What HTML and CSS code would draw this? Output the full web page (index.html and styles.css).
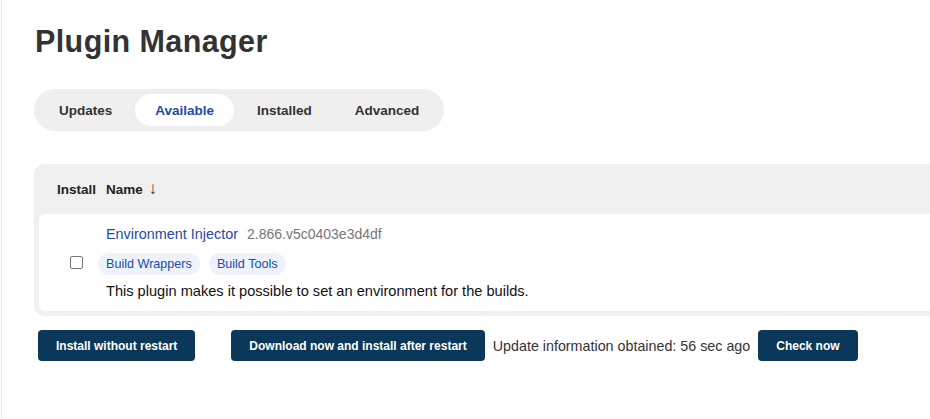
FILE: index.html
```html
<!DOCTYPE html>
<html>
<head>
<meta charset="utf-8">
<link rel="stylesheet" href="styles.css">
</head>
<body>
<div class="page">
  <h1 class="title">Plugin Manager</h1>
  <nav class="tabs">
    <span class="tab">Updates</span>
    <span class="tab active">Available</span>
    <span class="tab">Installed</span>
    <span class="tab">Advanced</span>
  </nav>
  <div class="table">
    <div class="thead">
      <span class="th th-install">Install</span>
      <span class="th th-name">Name <span class="arrow">↓</span></span>
    </div>
    <div class="row">
      <div class="cell-check"><span class="checkbox"></span></div>
      <div class="cell-info">
        <div class="name-line"><span class="pname">Environment Injector</span><span class="version">2.866.v5c0403e3d4df</span></div>
        <div class="tags"><span class="tag">Build Wrappers</span><span class="tag">Build Tools</span></div>
        <div class="desc">This plugin makes it possible to set an environment for the builds.</div>
      </div>
    </div>
  </div>
  <div class="actions">
    <button class="btn btn-first">Install without restart</button>
    <button class="btn">Download now and install after restart</button>
    <span class="info">Update information obtained: 56 sec ago</span>
    <button class="btn">Check now</button>
  </div>
</div>
</body>
</html>
```

FILE: styles.css
```css
html, body {
  margin: 0;
  padding: 0;
  background: #fff;
  overflow: hidden;
}
body {
  font-family: "Liberation Sans", Arial, Helvetica, sans-serif;
  color: #333;
}
.page {
  margin-left: 1px;
  border-left: 1px solid #ebebeb;
  min-height: 419px;
  box-sizing: border-box;
  padding: 24px 0 0 32px;
}
.title {
  margin: 0 0 0 1px;
  font-size: 30.5px;
  line-height: 34px;
  font-weight: 700;
  color: #333;
  letter-spacing: 0.4px;
}
.tabs {
  margin-top: 31px;
  display: inline-flex;
  gap: 3px;
  padding: 5px;
  background: #efefef;
  border-radius: 21px;
}
.tab {
  height: 32px;
  line-height: 33px;
  padding: 0 20px;
  font-size: 13.5px;
  font-weight: 700;
  color: #333;
  border-radius: 16px;
}
.tab.active {
  background: #fff;
  color: #1d4aab;
}
.table {
  margin-top: 33px;
  background: #f0f0f0;
  border-radius: 10px 0 0 10px;
  padding: 0 0 5px 5px;
}
.thead {
  height: 50px;
  display: flex;
  align-items: center;
  font-size: 13.5px;
  font-weight: 700;
  color: #222;
}
.th-install {
  margin-left: 18px;
  width: 49px;
}
.arrow {
  font-weight: 400;
  font-size: 17px;
  margin-left: 2px;
  color: #333;
}
.row {
  background: #fff;
  border-radius: 6px 0 0 6px;
  display: flex;
  height: 97px;
}
.cell-check {
  width: 67px;
  display: flex;
  align-items: center;
}
.checkbox {
  margin-left: 31px;
  width: 11px;
  height: 11px;
  border: 1px solid #767676;
  border-radius: 2px;
  background: #fff;
}
.cell-info {
  padding-top: 11px;
}
.name-line {
  font-size: 14px;
  line-height: 18px;
}
.pname {
  color: #1d4aab;
  font-size: 14.4px;
}
.version {
  color: #777;
  margin-left: 9px;
}
.tags {
  display: flex;
  gap: 9px;
  margin-top: 10px;
  margin-left: -8px;
}
.tag {
  background: #eef3fb;
  color: #1d4aab;
  font-size: 12.6px;
  height: 22px;
  line-height: 22px;
  padding: 0 8px;
  border-radius: 11px;
}
.desc {
  margin-top: 7px;
  font-size: 14.6px;
  line-height: 18px;
  color: #111;
}
.actions {
  margin-top: 14px;
  margin-left: 4px;
  display: flex;
  align-items: center;
  gap: 8px;
}
.btn {
  font-family: inherit;
  border: none;
  background: #0b3859;
  color: #fff;
  font-size: 12px;
  font-weight: 700;
  height: 31px;
  padding: 0 18px;
  border-radius: 4px;
}
.btn-first {
  margin-right: 28px;
}
.info {
  font-size: 14.3px;
  color: #333;
}
```
